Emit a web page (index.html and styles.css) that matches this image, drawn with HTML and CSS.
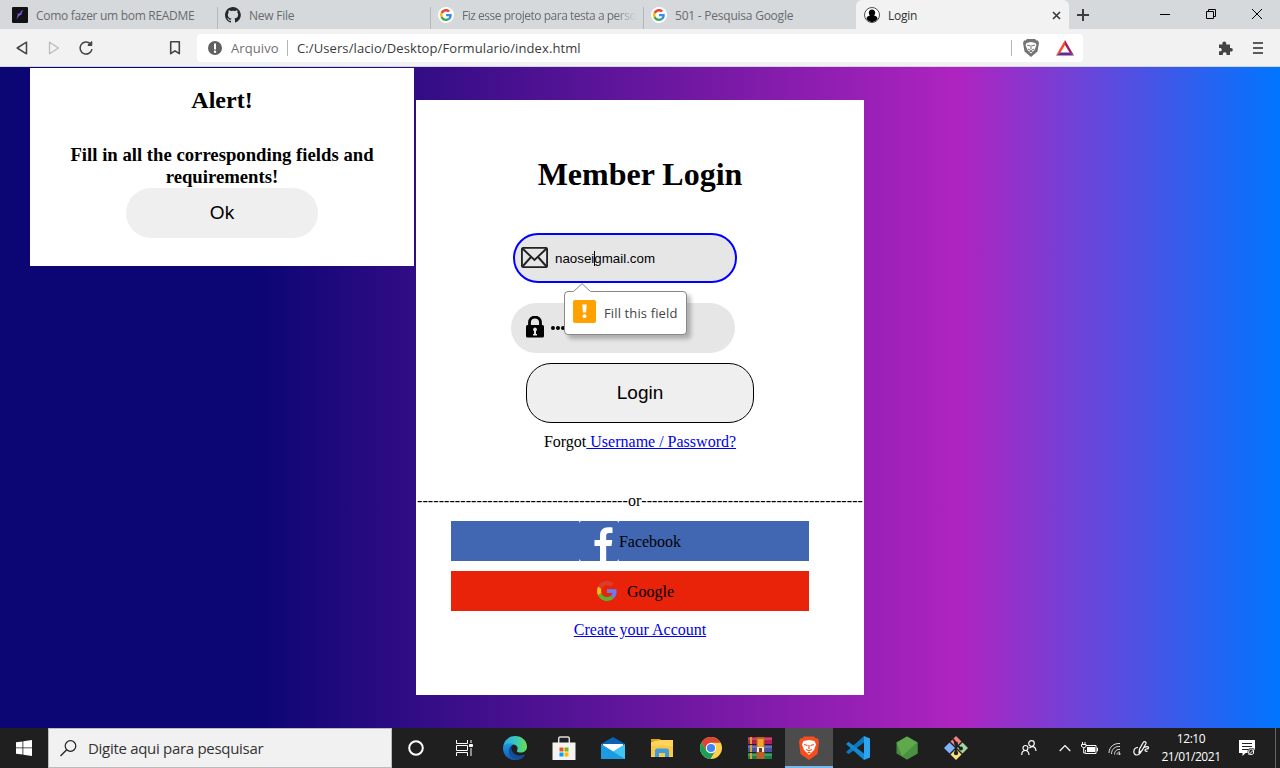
FILE: index.html
```html
<!DOCTYPE html>
<html lang="pt-BR">
<head>
<meta charset="utf-8">
<title>Login</title>
<link rel="stylesheet" href="styles.css">
</head>
<body>
<svg width="0" height="0" class="defs" aria-hidden="true">
  <symbol id="google" viewBox="0 0 48 48">
    <path fill="#ea4335" d="M24 9.500c3.500 0 6.700 1.200 9.200 3.600l6.900-6.900C35.900 2.400 30.500 0 24 0 14.600 0 6.500 5.400 2.600 13.200l8 6.200C12.400 13.700 17.700 9.500 24 9.500z"/>
    <path fill="#4285f4" d="M47 24.500c0-1.600-.2-3.100-.4-4.500H24v9h12.900c-.6 3-2.200 5.500-4.700 7.200l7.700 6C44.400 38 47 31.800 47 24.500z"/>
    <path fill="#fbbc05" d="M10.500 28.600c-.5-1.500-.8-3-.8-4.600s.3-3.100.8-4.600l-8-6.200C.9 16.500 0 20.100 0 24s.9 7.500 2.600 10.800z"/>
    <path fill="#34a853" d="M24 48c6.500 0 11.900-2.100 15.900-5.800l-7.700-6c-2.200 1.500-4.900 2.300-8.200 2.300-6.300 0-11.600-4.200-13.500-9.900l-8 6.200C6.500 42.600 14.600 48 24 48z"/>
  </symbol>
</svg>
<header class="tabs">
  <div class="tab">
    <svg class="fav" viewBox="0 0 16 16"><rect width="16" height="16" rx="1" fill="#121214"/><path d="M4.500 12.500C5.500 9 6 8 5.500 6.500L8 6.500 9 4l2.500-1L10 5l-.5 2.500L7 9z" fill="#8257e6"/></svg>
    <span class="title t1">Como fazer um bom README</span>
  </div>
  <div class="tab">
    <svg class="fav" viewBox="0 0 16 16"><path fill="#24292e" d="M8 0C3.600 0 0 3.600 0 8c0 3.500 2.300 6.500 5.500 7.600.4.100.500-.2.500-.4v-1.400c-2.200.5-2.700-1-2.700-1-.4-.9-.9-1.200-.9-1.200-.7-.5.100-.5.100-.5.800.1 1.200.8 1.200.8.700 1.300 1.900.9 2.300.7.100-.5.300-.9.500-1.100-1.800-.2-3.600-.9-3.600-4 0-.9.300-1.600.8-2.100-.1-.2-.4-1 .1-2.100 0 0 .7-.2 2.200.8a7.500 7.500 0 0 1 4 0c1.500-1 2.200-.8 2.200-.8.400 1.100.2 1.900.1 2.100.5.600.8 1.300.8 2.100 0 3.100-1.900 3.700-3.600 3.900.300.300.500.8.500 1.500v2.200c0 .2.100.500.600.4A8 8 0 0 0 8 0z"/></svg>
    <span class="title t2">New File</span>
  </div>
  <div class="tab">
    <svg class="fav" viewBox="0 0 16 16"><circle cx="8" cy="8" r="8" fill="#fff"/><use href="#google" x="2" y="2" width="12" height="12"/></svg>
    <span class="title fade t3">Fiz esse projeto para testa a perso</span>
  </div>
  <div class="tab last">
    <svg class="fav" viewBox="0 0 16 16"><circle cx="8" cy="8" r="8" fill="#fff"/><use href="#google" x="2" y="2" width="12" height="12"/></svg>
    <span class="title t4">501 - Pesquisa Google</span>
  </div>
  <div class="tab active">
    <svg class="fav" viewBox="0 0 16 16"><circle cx="8" cy="8" r="7.500" fill="#fff" stroke="#222" stroke-width=".8"/><path d="M8 2.500c2 0 3.200 1.400 3.200 3.100 0 1.300-.5 2.300-1.200 3 2.400.4 3.500 1.800 3.500 3.500A7 7 0 0 1 8 15.200a7 7 0 0 1-5.500-3.100c0-1.700 1.100-3.100 3.500-3.500-.7-.7-1.200-1.700-1.200-3C4.800 3.900 6 2.500 8 2.500z"/></svg>
    <span class="title t5">Login</span>
    <svg class="close" width="9" height="9" viewBox="0 0 9 9"><path d="M1 1l7 7M8 1L1 8" stroke="#3c3c3c" stroke-width="1.700"/></svg>
  </div>
  <svg class="plus" width="12" height="12" viewBox="0 0 12 12"><path d="M6 0v12M0 6h12" stroke="#3c3c3c" stroke-width="2"/></svg>
  <div class="win">
    <svg width="46" height="29" viewBox="0 0 46 29"><path d="M18 14.500h10" stroke="#000"/></svg>
    <svg width="46" height="29" viewBox="0 0 46 29" fill="none" stroke="#000"><path d="M18.500 11.500h7v7h-7zM20.500 11.500v-2h7v7h-2"/></svg>
    <svg width="46" height="29" viewBox="0 0 46 29"><path d="M18 9l10 10M28 9L18 19" stroke="#000"/></svg>
  </div>
</header>
<nav class="toolbar">
  <svg class="back" width="14" height="16" viewBox="0 0 14 16"><path d="M11.500 2.200v11.600L2.200 8z" fill="none" stroke="#444" stroke-width="1.500" stroke-linejoin="round"/></svg>
  <svg class="fwd" width="14" height="16" viewBox="0 0 14 16"><path d="M2.500 2.200v11.600L11.500 8z" fill="none" stroke="#bbb" stroke-width="1.300" stroke-linejoin="round"/></svg>
  <svg class="reload" width="16" height="16" viewBox="0 0 16 16"><path d="M12.500 4A6 6 0 1 0 14 9" fill="none" stroke="#444" stroke-width="1.500"/><path d="M10 5.500V4.800L13.800 1.500v4z" fill="#444" stroke="#444" stroke-linejoin="round"/></svg>
  <svg class="mark" width="12" height="16" viewBox="0 0 12 16"><path d="M1.700 1.700h8.600v12L6 10.800 1.700 13.700z" fill="none" stroke="#444" stroke-width="1.600" stroke-linejoin="round"/></svg>
  <div class="address">
    <svg width="14" height="14" viewBox="0 0 14 14"><circle cx="7" cy="7" r="7" fill="#5f6062"/><path d="M7 2.500v6" stroke="#fff" stroke-width="2"/><circle cx="7" cy="10.800" r="1.200" fill="#fff"/></svg>
    <span class="scheme">Arquivo</span><i class="bar"></i>
    <span class="url">C:/Users/lacio/Desktop/Formulario/index.html</span>
    <i class="bar end"></i>
    <svg class="shield" width="16" height="18" viewBox="0 0 16 18"><path d="M4 0h8l1.500 1.500H15L16 4l-1.500 8.500L8 18l-6.500-5.500L0 4l1-2.500h1.500z" fill="#737373"/><path d="M3.500 4L8 3l4.500 1 1 2-2 5L8 14.500 4.500 11l-2-5z" fill="#fff"/><path d="M4 6l3 .8M12 6l-3 .8M8 6v4M5 10l3 1.500L11 10M6.500 12.500h3" stroke="#737373" fill="none"/></svg>
    <svg class="bat" width="18" height="16" viewBox="0 0 18 16"><path d="M9 0L0 15.500 4.500 12.500 9 5z" fill="#ff4724"/><path d="M9 0l9 15.500-4.500-3L9 5z" fill="#9e1f63"/><path d="M0 15.500L4.500 12.500h9l4.500 3z" fill="#662d91"/></svg>
  </div>
  <svg class="puzzle" width="15" height="15" viewBox="0 0 15 15"><path fill="#444" d="M1 3.500h3.500C4 1.500 5 .5 6.300.5S8.600 1.500 8.200 3.500H12V7c2-.4 2.800.5 2.800 1.700s-.8 2.100-2.800 1.700V14H8.500c.4-2-.7-2.700-1.800-2.700S4.500 12 4.900 14H1v-3.700c2 .3 2.700-.5 2.700-1.600S3 6.800 1 7.200z"/></svg>
  <svg class="menu" width="10" height="12" viewBox="0 0 10 12"><path d="M0 1h10M0 6h10M0 11h10" stroke="#5a5a5a" stroke-width="2"/></svg>
</nav>
<main class="page">
  <section class="alert">
    <h2>Alert!</h2>
    <h3>Fill in all the corresponding fields and<br>requirements!</h3>
    <button class="ok">Ok</button>
  </section>
  <section class="card">
    <h1>Member Login</h1>
    <div class="field email">
      <svg class="mail" width="27" height="21" viewBox="0 0 27 21" fill="none" stroke="#222" stroke-width="1.900"><rect x=".9" y=".9" width="25.200" height="19.200" rx="1.500"/><path d="M1.500 1.500l12 11.500 12-11.500M1.500 19.500L10 10M25.500 19.500L17 10"/></svg>
      <span class="value">naosei<i class="caret"></i>gmail.com</span>
      <div class="tip">
        <svg class="arrow" width="18" height="9" viewBox="0 0 18 9"><path d="M0 9L9 .7 18 9z" fill="#fff"/><path d="M.5 8.500L9 .7l8.500 7.800" fill="none" stroke="#888"/></svg>
        <svg width="23" height="23" viewBox="0 0 23 23"><rect width="23" height="23" rx="2" fill="#ffa100"/><path d="M9.300 4.500h4.400l-.6 8h-3.200z" fill="#fff"/><circle cx="11.500" cy="16.200" r="1.900" fill="#fff"/></svg>
        <span class="msg">Fill this field</span>
      </div>
    </div>
    <div class="field pass">
      <svg class="lock" width="18" height="22" viewBox="0 0 18 22"><path d="M3.500 10V6.500a5.500 5.500 0 0 1 11 0V10" fill="none" stroke="#000" stroke-width="2.800"/><rect y="9" width="18" height="12.500" rx="1.500"/><path d="M9 11.500a2 2 0 0 1 1 3.700v2.800h1v1.500H7V18h1v-2.800a2 2 0 0 1 1-3.700z" fill="#e6e6e6"/></svg>
      <span class="dots"><i></i><i></i><i></i><i></i><i></i><i></i></span>
    </div>
    <button class="login">Login</button>
    <p class="forgot">Forgot<a href="#"> Username / Password?</a></p>
    <p class="or"><span class="dash">---------------------------------------</span>or<span class="dash">-----------------------------------------</span></p>
    <div class="social fb">
      <svg width="40" height="40" viewBox="0 0 40 40"><path d="M0 0h2L0 2zM40 0h-2l2 2zM0 40h2l-2-2zM40 40h-2l2-2z" fill="#fff" opacity=".7"/><path d="M21 40V25h-5.500v-6H21v-4.200c0-5.600 3.200-8.500 8-8.500 2 0 3.500.1 4.500.3v5.400h-3c-2.700 0-3.300 1.200-3.300 3V19h6.100l-.8 6h-5.300v15z" fill="#fff"/></svg>
      <span>Facebook</span>
    </div>
    <div class="social gg">
      <svg width="20" height="20" viewBox="0 0 48 48"><path fill="#d9402a" d="M24 9.500c3.500 0 6.700 1.200 9.200 3.600l6.900-6.900C35.900 2.400 30.500 0 24 0 14.600 0 6.500 5.400 2.600 13.200l8 6.200C12.400 13.700 17.700 9.500 24 9.500z"/><path fill="#6b7cf0" d="M47 24.500c0-1.600-.2-3.100-.4-4.500H24v9h12.900c-.6 3-2.200 5.500-4.700 7.200l7.700 6C44.400 38 47 31.800 47 24.500z"/><path fill="#f2c010" d="M10.500 28.600c-.5-1.500-.8-3-.8-4.600s.3-3.100.8-4.600l-8-6.200C.9 16.500 0 20.100 0 24s.9 7.500 2.600 10.800z"/><path fill="#5bb22f" d="M24 48c6.500 0 11.900-2.100 15.900-5.800l-7.700-6c-2.200 1.500-4.900 2.300-8.200 2.300-6.300 0-11.600-4.200-13.500-9.900l-8 6.200C6.500 42.600 14.600 48 24 48z"/></svg>
      <span>Google</span>
    </div>
    <p class="create"><a href="#">Create your Account</a></p>
  </section>
</main>
<footer class="taskbar">
  <div class="start"><svg width="16" height="16" viewBox="0 0 16 16" fill="#fff"><path d="M0 2.300L6.500 1.400V7.500H0zM7.300 1.300L16 0v7.500H7.300zM0 8.300h6.500v6.300L0 13.700zM7.300 8.300H16V16l-8.700-1.300z"/></svg></div>
  <div class="search">
    <svg width="17" height="17" viewBox="0 0 17 17"><circle cx="10.500" cy="6" r="5.300" fill="none" stroke="#222" stroke-width="1.200"/><path d="M6.700 9.800L.5 16" stroke="#222" stroke-width="1.300"/></svg>
    <span>Digite aqui para pesquisar</span>
  </div>
  <div class="cortana"><svg width="16" height="16" viewBox="0 0 16 16"><circle cx="8" cy="8" r="6.800" fill="none" stroke="#fff" stroke-width="2"/></svg></div>
  <div class="view"><svg width="17" height="16" viewBox="0 0 17 16" fill="none" stroke="#fff"><path d="M.5 0v3.500h11V0M.5 16v-3.500h11V16M.500 5.500h11v5H.5zM15 0v3M15 8v8"/><path d="M13.500 4.500h3v2h-3z" fill="#fff"/></svg></div>
  <div class="app"><svg width="24" height="24" viewBox="0 0 24 24"><defs><linearGradient id="eg" x1="0" x2="1"><stop offset="0" stop-color="#2aa9e0"/><stop offset=".5" stop-color="#34c6c4"/><stop offset="1" stop-color="#6adf4d"/></linearGradient><linearGradient id="eb" x1="0" x2="0" y2="1"><stop offset="0" stop-color="#1e9ae4"/><stop offset="1" stop-color="#1458b0"/></linearGradient></defs><path d="M0 11C1 4.500 6 0 12 0c7 0 12 5 12 10.500 0 4-3 6-6.500 6-3 0-4-1.200-3.500-2 1.200-1.500 1-5-3-6C7 7.500 2 7.500 0 11z" fill="url(#eg)"/><path d="M0 11c2-3.500 7-5 11-2.500-3 .5-4.500 4-3 7.500 2 4.500 7.500 6 14 3-2 3-5.500 5-10 5C5 24 0 19 0 12z" fill="url(#eb)"/><path d="M8.500 9.500c-5 4-3 12.500 4.500 14 4 0 7.500-2.300 9-5-6 2.500-11 .5-13-3.500-.8-2-.8-4-.5-5.500z" fill="#124e9b"/></svg></div>
  <div class="app"><svg width="24" height="24" viewBox="0 0 24 24"><path d="M6.700 8V2.500a1.500 1.500 0 0 1 1.500-1.500h7.600a1.500 1.500 0 0 1 1.500 1.500V8" fill="none" stroke="#ddd" stroke-width="1.500"/><path d="M.5 6.500h23V24H.5z" fill="#f3f3f3"/><path fill="#f25022" d="M7.500 11.500h4v4h-4z"/><path fill="#7fba00" d="M12.500 11.500h4v4h-4z"/><path fill="#00a4ef" d="M7.500 16.500h4v4h-4z"/><path fill="#ffb900" d="M12.500 16.500h4v4h-4z"/></svg></div>
  <div class="app"><svg width="24" height="24" viewBox="0 0 24 24"><path d="M0 8L12 1l12 7v4H0z" fill="#0a63b7"/><path d="M2 8h20v8H2z" fill="#fff"/><path d="M0 8l12 7.500L24 8v15H0z" fill="#40c6f4"/><path d="M0 8l24 15H0z" fill="#1c9be2"/></svg></div>
  <div class="app"><svg width="24" height="24" viewBox="0 0 24 24"><path d="M1 3h9l1.500 2H1z" fill="#e5a00d"/><path d="M1 5.500L11 4h12v17H1z" fill="#ffd35c"/><path d="M1 10h22v10H1z" fill="#fbc843"/><path d="M5 21v-6a2.500 2.500 0 0 1 2.500-2.500h9A2.500 2.500 0 0 1 19 15v6h-4v-4H9v4z" fill="#3d9be0"/></svg></div>
  <div class="app"><svg width="24" height="24" viewBox="0 0 24 24"><circle cx="12" cy="12" r="11" fill="#ffd04b"/><path d="M2.500 6.500A11 11 0 0 1 21.600 6.700H12L7.200 14.500z" fill="#db4437"/><path d="M2.500 6.500A11 11 0 0 0 11.500 23l4.800-8.300L12 17l-4.500-2z" fill="#1b9e58"/><circle cx="12" cy="12" r="5.200" fill="#fff"/><circle cx="12" cy="12" r="4.100" fill="#4285f4"/></svg></div>
  <div class="app"><svg width="24" height="24" viewBox="0 0 24 24"><rect y="1" width="24" height="7" fill="#b81d50"/><rect y="9" width="24" height="7" fill="#4a50a8"/><rect y="17" width="24" height="6" fill="#168347"/><path d="M0 3h24M0 11h24M0 19h24" stroke="#fff" stroke-opacity=".25" stroke-width="1.500"/><path d="M3 1v22" stroke="#d5a52a" stroke-width="2" stroke-dasharray="7 1"/><path d="M8.500 1h8v22h-8z" fill="#ba6125"/><path d="M9.500 3h6v8h-6z" fill="#f1a52b"/><path d="M9 11h7v5H9z" fill="#eee"/><path d="M11 12h3v4h-3z" fill="#6b3b1c"/></svg></div>
  <div class="app on"><svg width="20" height="24" viewBox="0 0 20 24"><path d="M5 .5h10L17 2.500l2-.2L20 6l-1.500 12L10 24 1.500 18 0 6l1-3.700 2 .2z" fill="#f64d1c"/><path d="M4.500 5L10 4l5.500 1L17 8.500l-2 5.500-1.500 1.500L10 19l-3.500-3.500L5 14 3 8.500z" fill="#fff"/><path d="M5 8.500l3.500 1M15 8.500l-3.500 1M10 9v4M7 13.500l3 1.200 3-1.200M8.500 17l1.500-.8 1.500.8" stroke="#f64d1c" stroke-width="1.200" fill="none"/></svg></div>
  <div class="app"><svg width="24" height="24" viewBox="0 0 24 24"><path d="M18 0l6 2.500v19L18 24z" fill="#2ba5ef"/><path d="M18 6.500L2.500 18.300 0 16 18 0z" fill="#0879be"/><path d="M18 17.500L2.500 5.700 0 8l18 16z" fill="#1389d4"/></svg></div>
  <div class="app"><svg width="22" height="24" viewBox="0 0 22 24"><path d="M11 .5l10.500 6v11L11 23.500l-10.500-6v-11z" fill="#48873e"/><path d="M11 .5l10.500 6L6 20.500.5 6.500z" fill="#5fa84c"/><path d="M21.500 6.500v11L11 23.500l-5-3z" fill="#4a9142"/></svg></div>
  <div class="app"><svg width="24" height="24" viewBox="0 0 24 24"><path d="M12 0l5.500 5.500-5.500 5.500-5.500-5.500z" fill="#f58282"/><path d="M5.500 6.500L11 12l-5.500 5.500L0 12z" fill="#80b3ff"/><path d="M18.500 6.500L24 12l-5.500 5.500L13 12z" fill="#a5d6a0"/><path d="M12 13l5.500 5.500L12 24l-5.500-5.500z" fill="#ffe080"/><path d="M9 3l3 4v11M12 8l5 5" stroke="#222" stroke-width="2" fill="none"/><g fill="#222"><circle cx="12" cy="7.500" r="2"/><circle cx="12" cy="17" r="2.200"/><circle cx="17" cy="12.500" r="2"/></g></svg></div>
  <div class="tray">
    <svg class="people" width="16" height="16" viewBox="0 0 16 16" fill="none" stroke="#fff" stroke-width="1.200"><circle cx="10.500" cy="3.500" r="2.800"/><circle cx="4.500" cy="8" r="2.500"/><path d="M.7 15c0-6 7.300-6 7.300 0M8.500 8c3-3 6.500-1 6.500 3"/></svg>
    <svg class="chev" width="12" height="8" viewBox="0 0 12 8"><path d="M.7 7L6 1.500 11.300 7" fill="none" stroke="#fff" stroke-width="1.200"/></svg>
    <svg class="power" width="17" height="13" viewBox="0 0 17 13"><path d="M5 3.500h10v8H4.500V8M15.500 6h1v3h-1" fill="none" stroke="#fff"/><path d="M6 5h8v5H6z" fill="#fff"/><path d="M1.500 0v2M4 0v2M.5 2.500h4.500v2L3 6 .5 4.500zM2.700 6v5H5" stroke="#fff" fill="#222"/></svg>
    <svg class="wifi" width="13" height="13" viewBox="0 0 13 13" fill="none" stroke="#ddd"><path d="M1 11C1 5 6 1 12 1.500M3.500 12c0-5 4-8 8.500-7.500M6.500 12.500C6.500 9 9 7 12 7.500M9 12.500C9 11 10 10 12 10"/><circle cx="11.500" cy="12" r=".7" fill="#fff"/></svg>
    <svg class="ink" width="17" height="17" viewBox="0 0 17 17" fill="none" stroke="#fff" stroke-width="1.200"><path d="M6 12.500l.5-3.500L10.500 2a1.500 1.500 0 0 1 2.500 1.500L9 10.500zM5 7.500C0 7.500-.5 14.500 3.500 15c3 .3 4-2 5-4M11.500 7.500c2-1.500 4.500-1 4 .5s-3.500.5-3.500 2 1.500 1.500 2.500 1"/></svg>
    <div class="clock"><span>12:10</span><span>21/01/2021</span></div>
    <svg class="note" width="17" height="17" viewBox="0 0 17 17"><path d="M0 0h16v13H6.500L3.500 16v-3H0z" fill="#fff"/><path d="M3 3.500h10M3 6.500h10M3 9.500h6" stroke="#222"/><circle cx="12.500" cy="12" r="4" fill="#222"/><path d="M10 10.500c1-2 4-2 4.500 0v3c-1.500 1.500-4 1.500-5-.5zM9.500 15l6-6" fill="none" stroke="#fff"/></svg>
    <i class="edge"></i>
  </div>
</footer>
</body>
</html>
```
FILE: styles.css
```css
* { box-sizing: border-box; }
body { margin: 0; width: 1280px; height: 768px; overflow: hidden; display: flex; flex-direction: column; font-family: "Open Sans", "Noto Sans", sans-serif; }
svg { display: block; flex: none; }
.defs { position: absolute; }
h1, h2, h3, p { margin: 0; }
a { color: #00e; }

.tabs { height: 29px; background: #d5d9dc; display: flex; align-items: center; padding-left: 4px; }
.tab { width: 213px; height: 29px; padding: 1px 4px 0 8px; display: flex; align-items: center; gap: 8px; position: relative; color: #696b6d; }
.tab:not(.last):not(.active)::after { content: ""; position: absolute; right: -1px; top: 7px; height: 22px; width: 1px; background: #b3b6b9; }
.fav { width: 16px; height: 16px; }
.title { font-size: 12px; line-height: 16px; white-space: nowrap; padding-top: 1px; }
.t1 { letter-spacing: -0.3px; }
.t2, .t4, .t5 { letter-spacing: -0.23px; }
.t3 { letter-spacing: -0.48px; }
.fade { -webkit-mask-image: linear-gradient(to right, #000 88%, transparent); mask-image: linear-gradient(to right, #000 88%, transparent); }
.active { background: #f2f2f2; color: #333; border-radius: 6px 6px 0 0; padding-right: 8px; }
.close { margin-left: auto; }
.plus { margin-left: 8px; margin-top: 1px; }
.win { display: flex; margin-left: auto; }

.toolbar { height: 38px; background: #f2f2f2; border-bottom: 1px solid #d3d5d6; display: flex; align-items: center; padding: 1px 17px 0 15px; }
.fwd { margin-left: 18px; }
.reload { margin-left: 17px; }
.mark { margin-left: 75px; }
.address { width: 886px; height: 28px; margin-left: 16px; background: #fff; border-radius: 4px; display: flex; align-items: center; padding: 0 9px 0 11px; font-size: 13px; }
.scheme { color: #707070; width: 56px; margin-left: 9px; letter-spacing: 0.1px; }
.bar { width: 1px; height: 16px; background: #b5b5b5; }
.url { color: #3a3a3a; margin-left: 9px; letter-spacing: 0.1px; white-space: nowrap; }
.end { margin-left: auto; }
.shield { margin-left: 11px; }
.bat { margin-left: 17px; }
.puzzle { margin-left: auto; }
.menu { margin-left: 20px; }

.page { height: 661px; background: linear-gradient(to right, #0c0574 20%, #af24c0 75%, #0075ff); display: flex; align-items: flex-start; font-family: "Liberation Serif", serif; }
.alert { width: 384px; height: 198px; margin: 1px 0 0 30px; background: #fff; display: flex; flex-direction: column; align-items: center; padding-top: 18px; text-align: center; }
.alert h2 { font-size: 24px; line-height: 28px; }
.alert h3 { font-size: 18.72px; line-height: 22px; margin-top: 30px; }
button { font-family: "Liberation Sans", sans-serif; background: #efefef; color: #000; padding: 0; }
.ok { width: 192px; height: 50px; border: 0; border-radius: 25px; font-size: 19px; }
.card { width: 448px; height: 595px; margin: 33px 0 0 2px; background: #fff; display: flex; flex-direction: column; align-items: center; padding-top: 56px; font-size: 16px; line-height: 18px; }
.card h1 { font-size: 32px; line-height: 37px; }
.field { width: 224px; height: 50px; border-radius: 25px; background: #e6e6e6; display: flex; align-items: center; }
.email { border: 2px solid #00f; margin: 40px 0 0 -30px; padding-left: 6px; position: relative; }
.mail { margin-bottom: 1px; }
.value { font: 13.33px "Liberation Sans", sans-serif; margin-left: 7px; padding-top: 1px; display: flex; align-items: center; }
.caret { width: 1px; height: 15px; background: #000; margin-right: -1px; }
.pass { margin: 20px 0 0 -34px; padding-left: 15px; }
.lock { margin-bottom: 2px; }
.dots { display: flex; gap: 1px; margin-left: 7px; }
.dots i { width: 4px; height: 4px; border-radius: 50%; background: #000; }
.tip { position: absolute; left: 49px; top: 56px; width: 123px; height: 44px; padding: 0 0 4px 8px; background: #fff; border: 1px solid #888; border-radius: 4px; box-shadow: 4px 4px 4px rgba(0,0,0,.25); display: flex; align-items: center; gap: 8px; font: 13px "Open Sans", sans-serif; color: #444; white-space: nowrap; z-index: 1; }
.msg { padding-top: 4px; letter-spacing: 0.13px; }
.arrow { position: absolute; left: 8px; top: -9px; }
.login { width: 228px; height: 60px; margin-top: 10px; border: 1px solid #000; border-radius: 25px; font-size: 19px; }
.forgot { margin-top: 10px; }
.or { margin-top: 41px; white-space: nowrap; }
.dash { letter-spacing: 0.08px; }
.social { width: 358px; height: 40px; margin-right: 20px; display: flex; align-items: center; justify-content: center; }
.social span { padding-top: 1px; }
.fb { background: #4267b2; margin-top: 11px; }
.gg { background: #e8230a; margin-top: 10px; gap: 10px; padding-left: 11px; }
.create { margin-top: 10px; }

.taskbar { height: 40px; background: #1f1f1f; display: flex; color: #fff; }
.start, .cortana, .view, .app { display: flex; align-items: center; justify-content: center; height: 40px; }
.start, .cortana, .view { width: 48px; }
.view { margin-right: 3px; }
.app { width: 49px; }
.app:nth-child(5) { margin-left: -1px; }
.on { width: 48px; margin-left: 1px; background: #4c4c4c; border-bottom: 2px solid #76b9ed; padding-top: 2px; }
.search { width: 344px; background: #f1f1f1; border: 1px solid #bbb; color: #333; display: flex; align-items: center; padding-left: 11px; gap: 11px; font-size: 15px; letter-spacing: -0.3px; }
.tray { flex: 1; display: flex; align-items: center; padding-right: 4px; }
.people { margin-left: auto; }
.chev { margin-left: 22px; }
.power { margin-left: 10px; }
.wifi { margin-left: 10px; }
.ink { margin-left: 12px; }
.clock { display: flex; flex-direction: column; align-items: center; width: 60px; margin-left: 11px; font-size: 12px; line-height: 18px; letter-spacing: -0.45px; white-space: nowrap; }
.note { margin-left: 18px; }
.edge { width: 1px; height: 40px; background: #666; margin-left: 19px; }
```
